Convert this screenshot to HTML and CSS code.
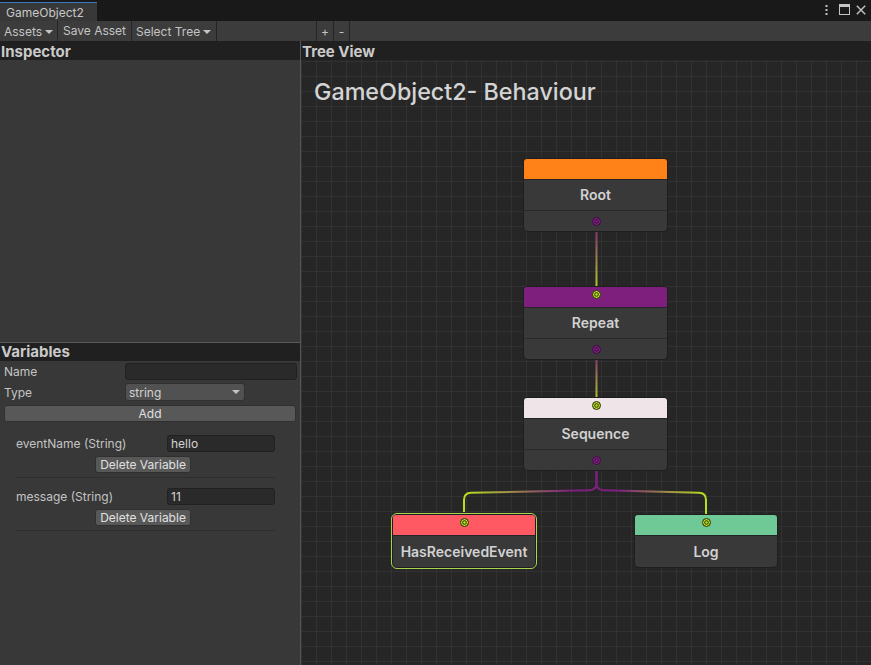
FILE: index.html
```html
<!DOCTYPE html>
<html>
<head>
<meta charset="utf-8">
<title>GameObject2</title>
<link rel="stylesheet" href="styles.css">
</head>
<body>
<div class="window">
  <div class="tabbar">
    <div class="tab">GameObject2</div>
    <div class="win-icons">
      <svg class="ico-kebab" width="3" height="11" viewBox="0 0 3 11"><rect x="0.5" y="0" width="2" height="2" fill="#c4c4c4"/><rect x="0.5" y="4" width="2" height="2" fill="#c4c4c4"/><rect x="0.5" y="8" width="2" height="2" fill="#c4c4c4"/></svg>
      <svg class="ico-max" width="11" height="11" viewBox="0 0 11 11"><rect x="0.5" y="0.5" width="10" height="10" fill="none" stroke="#c4c4c4" stroke-width="1"/><rect x="0" y="0" width="11" height="3" fill="#c4c4c4"/></svg>
      <svg class="ico-close" width="10" height="10" viewBox="0 0 10 10"><path d="M0.8 0.8 L9.2 9.2 M9.2 0.8 L0.8 9.2" stroke="#c4c4c4" stroke-width="1.4" fill="none"/></svg>
    </div>
  </div>

  <div class="toolbar">
    <div class="tb-btn tb-assets">Assets<svg class="caret" width="8" height="4" viewBox="0 0 8 4"><path d="M0 0 H8 L4 4 Z" fill="#c4c4c4"/></svg></div>
    <div class="tb-btn tb-save">Save Asset</div>
    <div class="tb-btn tb-select">Select Tree<svg class="caret" width="8" height="4" viewBox="0 0 8 4"><path d="M0 0 H8 L4 4 Z" fill="#c4c4c4"/></svg></div>
    <div class="tb-spacer"></div>
    <div class="tb-btn tb-plus">+</div>
    <div class="tb-btn tb-minus">-</div>
  </div>

  <div class="main">
    <div class="left">
      <div class="panel-header">Inspector</div>
      <div class="inspector-body"></div>
      <div class="panel-header vars-header">Variables</div>
      <div class="vars">
        <div class="form-row">
          <span class="form-label">Name</span>
          <div class="input input-name"></div>
        </div>
        <div class="form-row row-type">
          <span class="form-label">Type</span>
          <div class="dropdown">string<svg class="dd-caret" width="8" height="4" viewBox="0 0 8 4"><path d="M0 0 H8 L4 4 Z" fill="#c4c4c4"/></svg></div>
        </div>
        <div class="btn btn-add">Add</div>
        <div class="var-list">
          <div class="var-item">
            <div class="var-row">
              <span class="var-label">eventName (String)</span>
              <div class="input input-var">hello</div>
            </div>
            <div class="btn btn-del">Delete Variable</div>
          </div>
          <div class="var-item">
            <div class="var-row">
              <span class="var-label">message (String)</span>
              <div class="input input-var">11</div>
            </div>
            <div class="btn btn-del">Delete Variable</div>
          </div>
        </div>
      </div>
    </div>

    <div class="right">
      <div class="panel-header tree-header">Tree View</div>
      <div class="canvas">
        <svg class="links" width="570" height="605" viewBox="0 0 570 605">
          <defs>
            <linearGradient id="g1" gradientUnits="userSpaceOnUse" x1="0" y1="163" x2="0" y2="235">
              <stop offset="0" stop-color="#7e1f7e"/><stop offset="1" stop-color="#b7e01c"/>
            </linearGradient>
            <linearGradient id="g2" gradientUnits="userSpaceOnUse" x1="0" y1="291" x2="0" y2="346">
              <stop offset="0" stop-color="#7e1f7e"/><stop offset="1" stop-color="#b7e01c"/>
            </linearGradient>
            <linearGradient id="g3" gradientUnits="userSpaceOnUse" x1="295.5" y1="0" x2="163" y2="0">
              <stop offset="0" stop-color="#7e1f7e"/><stop offset="0.2" stop-color="#7e1f7e"/><stop offset="1" stop-color="#b7e01c"/>
            </linearGradient>
            <linearGradient id="g4" gradientUnits="userSpaceOnUse" x1="295.5" y1="0" x2="405" y2="0">
              <stop offset="0" stop-color="#7e1f7e"/><stop offset="0.2" stop-color="#7e1f7e"/><stop offset="1" stop-color="#b7e01c"/>
            </linearGradient>
          </defs>
          <path d="M295.5 167 L295.5 231" stroke="url(#g1)" stroke-width="2" fill="none"/>
          <path d="M295.5 295 L295.5 342" stroke="url(#g2)" stroke-width="2" fill="none"/>
          <path d="M295.5 406 L295.5 423 Q295.5 430 288.5 430.2 L170 432.8 Q163 433 163 440 L163 452" stroke="url(#g3)" stroke-width="2" fill="none"/>
          <path d="M295.5 406 L295.5 423 Q295.5 430 302.5 430.2 L398 432.8 Q405 433 405 440 L405 455" stroke="url(#g4)" stroke-width="2" fill="none"/>
        </svg>

        <h1 class="graph-title">GameObject2- Behaviour</h1>

        <div class="node node-root">
          <div class="node-head head-orange"></div>
          <div class="node-label">Root</div>
          <div class="node-foot"><span class="port port-out"></span></div>
        </div>

        <div class="node node-repeat">
          <div class="node-head head-purple"><span class="port port-in"></span></div>
          <div class="node-label">Repeat</div>
          <div class="node-foot"><span class="port port-out"></span></div>
        </div>

        <div class="node node-sequence">
          <div class="node-head head-white"><span class="port port-in"></span></div>
          <div class="node-label">Sequence</div>
          <div class="node-foot"><span class="port port-out"></span></div>
        </div>

        <div class="node leaf node-event selected">
          <div class="node-head head-red"><span class="port port-in"></span></div>
          <div class="node-label">HasReceivedEvent</div>
        </div>

        <div class="node leaf node-log">
          <div class="node-head head-green"><span class="port port-in"></span></div>
          <div class="node-label">Log</div>
        </div>
      </div>
    </div>
  </div>
</div>
</body>
</html>
```

FILE: styles.css
```css
* { box-sizing: border-box; }

html, body {
  margin: 0;
  padding: 0;
}

body {
  width: 871px;
  height: 665px;
  overflow: hidden;
  background: #383838;
  font-family: Inter, "Noto Sans", "DejaVu Sans", sans-serif;
  font-size: 12px;
  color: #c4c4c4;
}

.window {
  display: flex;
  flex-direction: column;
  height: 665px;
}

/* ---------- tab bar ---------- */
.tabbar {
  height: 21px;
  background: #191919;
  display: flex;
  align-items: flex-start;
}

.tab {
  margin-top: 2px;
  width: 97px;
  height: 19px;
  background: #383838;
  border-top: 1px solid #3a79c0;
  padding: 1px 0 0 6px;
  line-height: 17px;
  font-size: 12px;
  color: #c8c8c8;
}

.win-icons {
  margin-left: auto;
  height: 21px;
  display: flex;
  align-items: flex-start;
  padding-right: 5px;
}

.ico-kebab { margin-top: 5px; }
.ico-max { margin-top: 4px; margin-left: 11px; }
.ico-close { margin-top: 5px; margin-left: 6px; }

/* ---------- toolbar ---------- */
.toolbar {
  height: 20px;
  background: #3c3c3c;
  display: flex;
}

.tb-btn {
  display: flex;
  align-items: center;
  height: 20px;
  border-right: 1px solid #242424;
  color: #c4c4c4;
  font-size: 12px;
  white-space: nowrap;
}

.tb-assets { width: 58px; padding-left: 4px; }
.tb-save { width: 74px; justify-content: center; padding-bottom: 2px; }
.tb-select { width: 85px; padding-left: 4px; }
.caret { margin-left: 3px; margin-top: 1px; }

.tb-spacer {
  width: 100px;
  border-right: 1px solid #242424;
}

.tb-plus { width: 17px; justify-content: center; }
.tb-minus { width: 16px; justify-content: center; }

/* ---------- main ---------- */
.main {
  flex: 1;
  display: flex;
  min-height: 0;
}

.left {
  width: 301px;
  border-right: 1px solid #565656;
  display: flex;
  flex-direction: column;
  background: #383838;
}

.panel-header {
  height: 19px;
  background: #202020;
  font-size: 15px;
  font-weight: 700;
  color: #cacaca;
  line-height: 17px;
  padding: 2px 0 0 1px;
  white-space: nowrap;
}

.inspector-body {
  height: 282px;
  background: #383838;
}

.vars-header {
  height: 19px;
  padding-top: 0;
  border-top: 1px solid #5a5a5a;
}

.vars {
  flex: 1;
  background: #383838;
  padding-top: 1px;
}

.form-row {
  display: flex;
  align-items: center;
  height: 17px;
  margin-top: 1px;
}

.row-type {
  height: 18px;
  margin-top: 3px;
}

.form-label {
  width: 125px;
  padding-left: 4px;
  font-size: 12px;
  color: #c4c4c4;
}

.input {
  height: 17px;
  background: #2a2a2a;
  border: 1px solid #212121;
  border-radius: 3px;
  padding-left: 3px;
  line-height: 15px;
  font-size: 12px;
  color: #d2d2d2;
}

.input-name { width: 172px; }

.dropdown {
  width: 120px;
  height: 18px;
  background: #515151;
  border: 1px solid #303030;
  border-radius: 3px;
  padding-left: 3px;
  display: flex;
  align-items: center;
  font-size: 12px;
  color: #d2d2d2;
}

.dd-caret { margin-left: auto; margin-right: 4px; }

.btn {
  height: 17px;
  background: #585858;
  border: 1px solid #303030;
  border-radius: 3px;
  text-align: center;
  line-height: 15px;
  font-size: 12px;
  color: #e0e0e0;
}

.btn-add {
  margin: 4px 4px 0 4px;
  width: 292px;
}

.var-list {
  margin-left: 15px;
  width: 260px;
  padding-top: 3px;
}

.var-item {
  padding: 10px 0 4px;
  border-bottom: 1px solid #2e2e2e;
}

.var-row {
  display: flex;
  align-items: center;
  height: 17px;
}

.var-label {
  width: 152px;
  padding-left: 1px;
  font-size: 12px;
  color: #c4c4c4;
}

.input-var { width: 108px; }

.btn-del {
  margin: 4px 0 0 80px;
  width: 96px;
}

/* ---------- graph ---------- */
.right {
  flex: 1;
  display: flex;
  flex-direction: column;
  min-width: 0;
}

.tree-header { padding-left: 1px; }

.canvas {
  flex: 1;
  position: relative;
  overflow: hidden;
  background-color: #262626;
  background-image:
    linear-gradient(90deg, #313131 1px, transparent 1px),
    linear-gradient(180deg, #313131 1px, transparent 1px);
  background-size: 15px 15px;
  background-position: 0 1px;
  padding: 18px 0 0 13px;
}

.links {
  position: absolute;
  left: 0;
  top: 0;
  z-index: 0;
}

.graph-title {
  position: relative;
  margin: 0;
  font-size: 23.3px;
  font-weight: 500;
  line-height: 27px;
  color: #d4d4d4;
  white-space: nowrap;
}

.node {
  position: absolute;
  z-index: 1;
  width: 143px;
  background: #393939;
  border-radius: 4px;
  box-shadow: 0 0 0 1px #1e1e1e;
}

.node-root { left: 223px; top: 99px; }
.node-repeat { left: 223px; top: 227px; }
.node-sequence { left: 223px; top: 338px; }
.node-event { left: 92px; top: 455px; width: 142px; }
.node-log { left: 334px; top: 455px; width: 142px; }

.node.selected {
  outline: 1px solid #a9d44c;
  outline-offset: 1px;
}

.node-head {
  position: relative;
  height: 21px;
  border-bottom: 1px solid #242424;
  border-radius: 3px 3px 0 0;
}

.head-orange { background: #ff8218; }
.head-purple { background: #7e1f7e; }
.head-white { background: #efe5e9; }
.head-red { background: #ff5a64; }
.head-green { background: #6ec996; }

.node-label {
  height: 30px;
  line-height: 30px;
  text-align: center;
  font-size: 14px;
  font-weight: 600;
  color: #d2d2d2;
  white-space: nowrap;
}

.leaf .node-label { height: 31px; line-height: 31px; }

.node-foot {
  position: relative;
  height: 21px;
  border-top: 1px solid #2a2a2a;
}

.port {
  position: absolute;
  left: 50%;
  width: 9px;
  height: 9px;
  margin-left: -4px;
  border-radius: 50%;
}

.port-in {
  top: 3px;
  background: #c4ec1e;
  border: 1px solid #2a2e12;
  box-shadow: inset 0 0 0 1.2px #c4ec1e, inset 0 0 0 2.2px #2e3410;
}

.port-out {
  top: 6px;
  background: #86208a;
  border: 1px solid #3a0f3a;
  box-shadow: inset 0 0 0 1.2px #86208a, inset 0 0 0 2.2px #3a0f3a;
}
```
